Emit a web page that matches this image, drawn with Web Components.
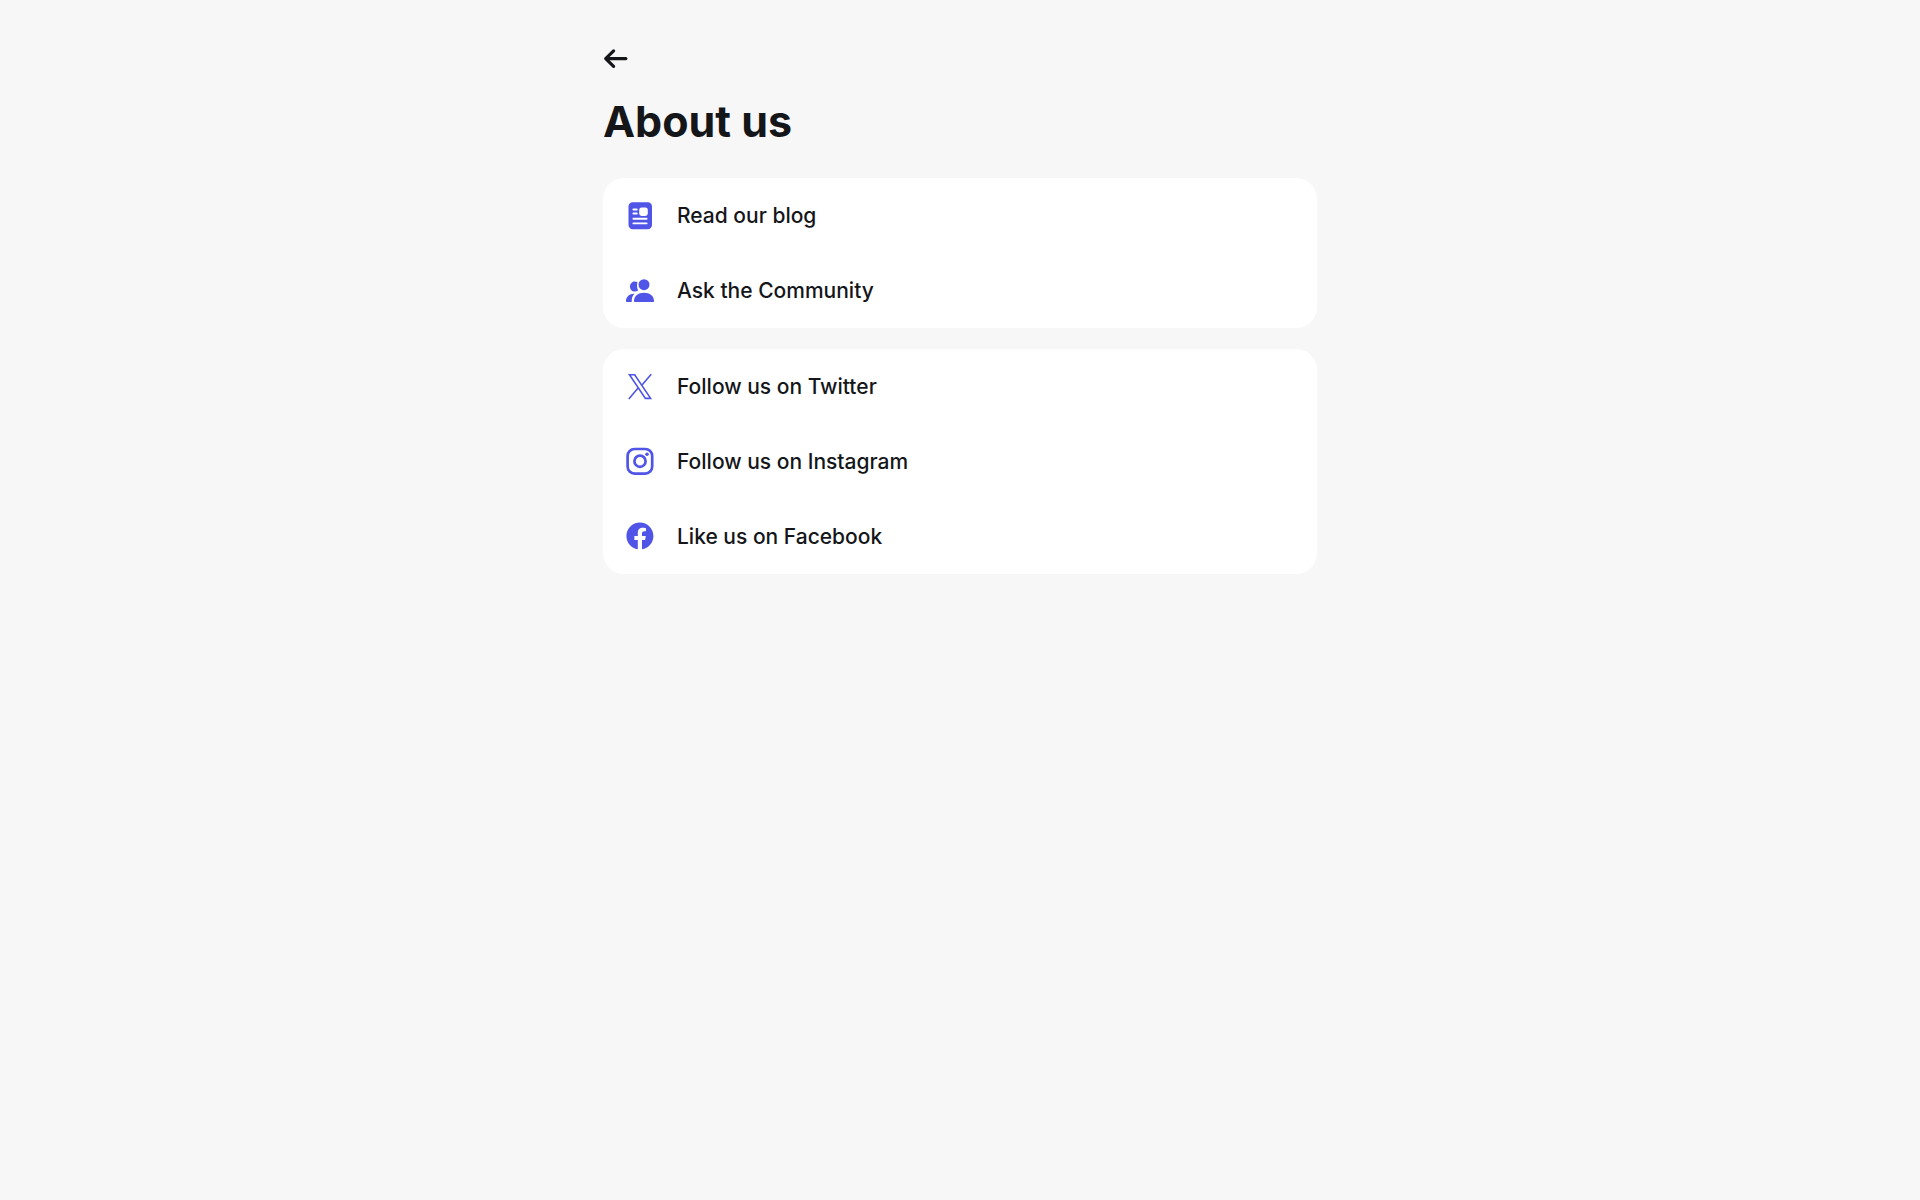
<!DOCTYPE html>
<html lang="en">
<head>
<meta charset="utf-8">
<meta name="viewport" content="width=device-width, initial-scale=1">
<title>About us</title>
<style>
  body {
    margin: 0;
    min-height: 100vh;
    background: #f7f7f7;
    color: #14161a;
    font-family: Inter, "Liberation Sans", sans-serif;
  }
</style>
</head>
<body>
<about-page heading="About us">
  <link-card>
    <link-row icon="blog">Read our blog</link-row>
    <link-row icon="community">Ask the Community</link-row>
  </link-card>
  <link-card>
    <link-row icon="x">Follow us on Twitter</link-row>
    <link-row icon="instagram">Follow us on Instagram</link-row>
    <link-row icon="facebook">Like us on Facebook</link-row>
  </link-card>
</about-page>

<script>
const ICONS = {
  blog: `
    <rect x="4.5" y="2.3" width="23.5" height="27" rx="4.2" fill="currentColor"/>
    <rect x="15.2" y="7.6" width="8.6" height="8.4" rx="2.4" fill="#fff"/>
    <path d="M9.4 9.5h3.4M9.4 13.5h3.4M9.4 18.8h13.2M9.4 23.4h13.2" fill="none" stroke="#fff" stroke-width="1.9" stroke-linecap="round"/>`,
  community: `
    <circle cx="20" cy="9.7" r="5.5" fill="currentColor"/>
    <path d="M10 25.9c0-4.8 4.2-8.2 10-8.2s10 3.4 10 8.2c0 .7-.4 1.1-1.1 1.1H11.1c-.7 0-1.1-.4-1.1-1.1z" fill="currentColor"/>
    <path d="M13.5 7.3C12.7 9.6 12.9 12.9 14.1 15.6C10.4 18 6 15.9 6 11.7C6 7.5 10.1 5.2 13.5 7.3z" fill="currentColor"/>
    <path d="M2 25.9c0-4.3 3.600-7.500 8.500-7.200C8.600 20.600 7.600 23 7.700 27H3.100C2.400 27 2 26.600 2 25.900z" fill="currentColor"/>`,
  x: `
    <path d="M5.500 3.700h5.200l15.900 23.700h-5.200zM27.200 3.200l-9.600 11.200M4.800 27.900l9.700-11.400" fill="none" stroke="currentColor" stroke-width="1.600"/>`,
  instagram: `
    <g fill="none" stroke="currentColor" stroke-width="2.700">
      <rect x="3.600" y="3" width="24.600" height="24.600" rx="7"/>
      <circle cx="16" cy="15.200" r="5.600"/>
    </g>
    <circle cx="23" cy="8.300" r="1.800" fill="currentColor"/>`,
  facebook: `
    <path transform="translate(2.400 1.400) scale(1.125)" fill="currentColor" d="M24 12.073c0-6.627-5.373-12-12-12s-12 5.373-12 12c0 5.990 4.388 10.954 10.125 11.854v-8.385H7.078v-3.470h3.047V9.430c0-3.007 1.792-4.669 4.533-4.669 1.312 0 2.686.235 2.686.235v2.953H15.830c-1.491 0-1.956.925-1.956 1.874v2.250h3.328l-.532 3.470h-2.796v8.385C19.612 23.027 24 18.062 24 12.073z"/>`
};

customElements.define('about-page', class extends HTMLElement {
  connectedCallback() {
    this.attachShadow({ mode: 'open' }).innerHTML = `
      <style>
        :host { display: block; padding: 47px 24px; }
        main { max-width: 714px; margin: 0 auto; }
        button {
          display: block; width: 26px; height: 24px; padding: 0;
          border: 0; background: none; color: inherit; cursor: pointer;
        }
        svg { display: block; }
        h1 { margin: 24px 0 31px; font-size: 43px; line-height: 52px; font-weight: 700; }
        .cards { display: flex; flex-direction: column; gap: 21px; }
      </style>
      <main>
        <button type="button" aria-label="Back">
          <svg width="26" height="24" viewBox="0 0 26 24" fill="none" stroke="currentColor" stroke-width="3.2" stroke-linecap="round" stroke-linejoin="round" aria-hidden="true">
            <path d="M3 11.6h19.900M10.600 3.900L2.700 11.600l7.900 7.700"/>
          </svg>
        </button>
        <h1></h1>
        <div class="cards"><slot></slot></div>
      </main>`;
    this.shadowRoot.querySelector('h1').textContent = this.getAttribute('heading');
  }
});

customElements.define('link-card', class extends HTMLElement {
  connectedCallback() {
    this.attachShadow({ mode: 'open' }).innerHTML = `
      <style>
        :host { display: block; background: #fff; border-radius: 21px; overflow: hidden; }
      </style>
      <slot></slot>`;
  }
});

customElements.define('link-row', class extends HTMLElement {
  connectedCallback() {
    this.attachShadow({ mode: 'open' }).innerHTML = `
      <style>
        :host { display: block; }
        a {
          display: flex; align-items: center; gap: 21px; padding: 22px 21px;
          color: inherit; text-decoration: none;
          font-size: 21px; line-height: 31px; font-weight: 450;
        }
        svg { flex: none; display: block; color: #5055e8; }
      </style>
      <a href="#">
        <svg width="32" height="31" viewBox="0 0 32 31" aria-hidden="true">${ICONS[this.getAttribute('icon')]}</svg>
        <span><slot></slot></span>
      </a>`;
  }
});
</script>
</body>
</html>
